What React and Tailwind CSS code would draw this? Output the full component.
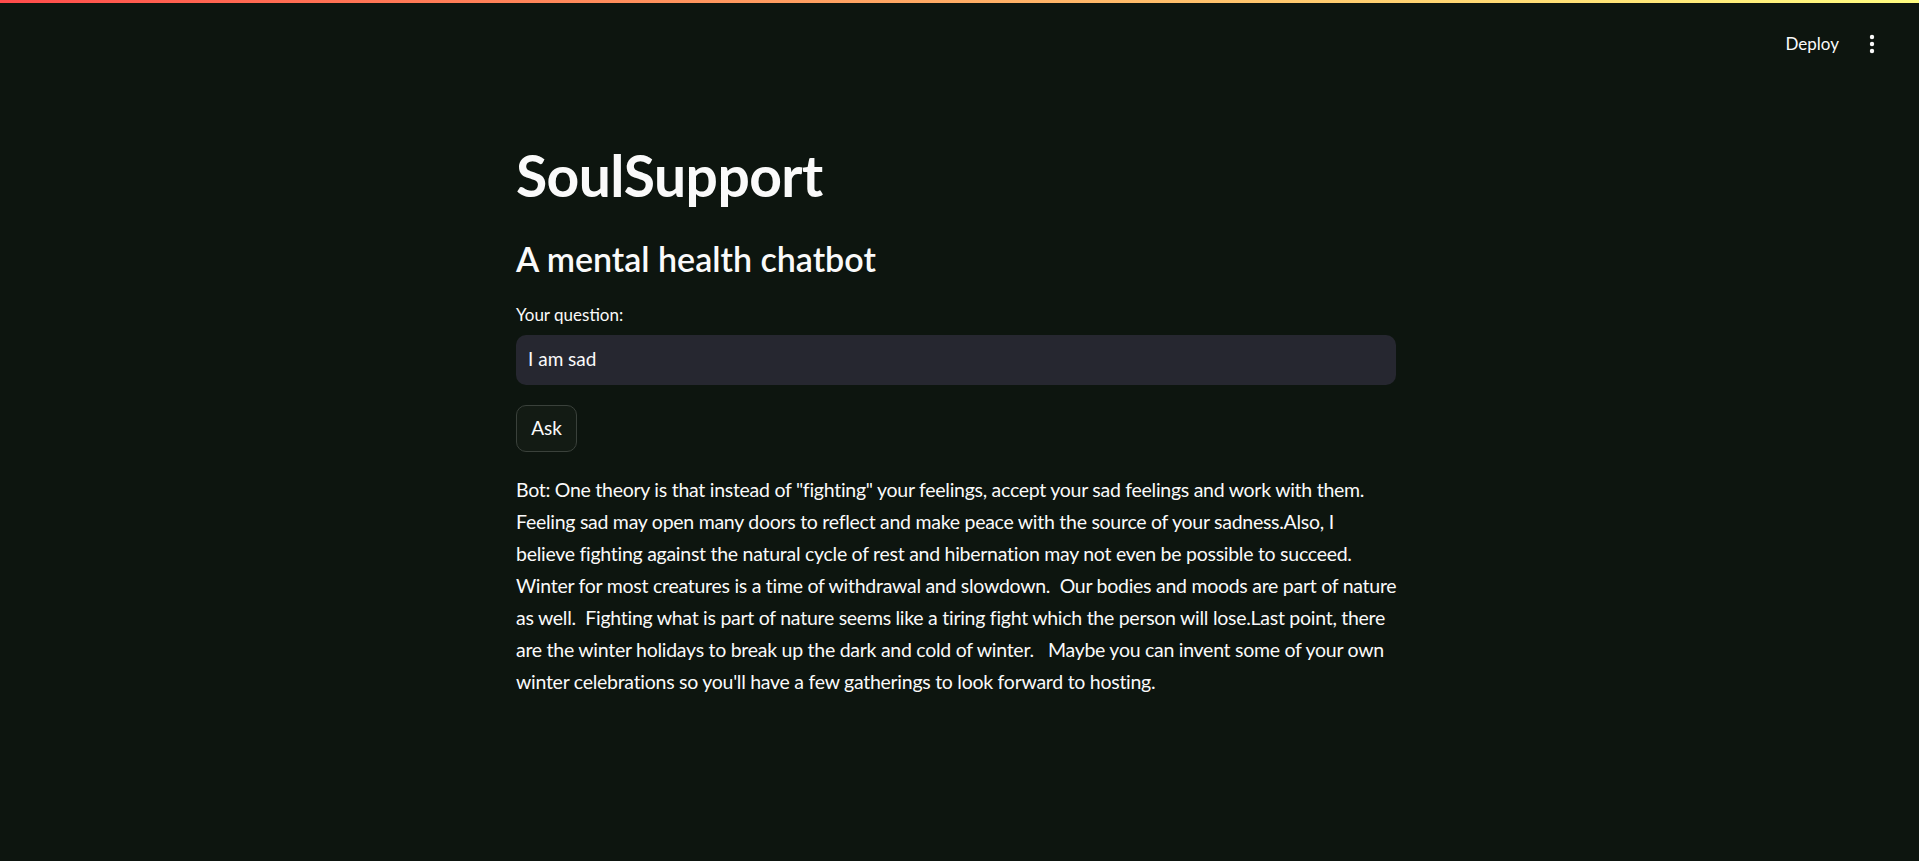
import React from "react";

const lines = [
  'Bot: One theory is that instead of "fighting" your feelings, accept your sad feelings and work with them.',
  "Feeling sad may open many doors to reflect and make peace with the source of your sadness.Also, I",
  "believe fighting against the natural cycle of rest and hibernation may not even be possible to succeed.",
  "Winter for most creatures is a time of withdrawal and slowdown.\u00a0 Our bodies and moods are part of nature",
  "as well.\u00a0 Fighting what is part of nature seems like a tiring fight which the person will lose.Last point, there",
  "are the winter holidays to break up the dark and cold of winter.\u00a0\u00a0 Maybe you can invent some of your own",
  "winter celebrations so you'll have a few gatherings to look forward to hosting.",
];

export default function App() {
  return (
    <div
      className="min-h-[861px] w-full bg-[#0d150f] text-[#fafafa]"
      style={{ fontFamily: "Lato, 'Noto Sans', sans-serif" }}
    >
      <div className="h-[3px] w-full bg-gradient-to-r from-[#ff4b4b] to-[#fffd80]" />
      <header className="flex h-[82px] items-center justify-end pr-[35px]">
        <span className="text-[17px] font-normal">Deploy</span>
        <span className="ml-[21px] flex h-[24px] w-[24px] items-center justify-center">
          <svg width="6" height="20" viewBox="0 0 6 20" fill="#fafafa">
            <circle cx="3" cy="3" r="2.2" />
            <circle cx="3" cy="10" r="2.2" />
            <circle cx="3" cy="17" r="2.2" />
          </svg>
        </span>
      </header>
      <main className="ml-[516px] w-[880px] pt-[56px]">
        <h1 className="text-[57px] font-bold leading-[1.2] tracking-[-0.01em]">SoulSupport</h1>
        <h3 className="mt-[30px] text-[34px] font-semibold leading-[1.2]">A mental health chatbot</h3>
        <label className="mt-[22px] block text-[17px] leading-[1.5]">Your question:</label>
        <div className="mt-[7px] flex h-[50px] items-center rounded-[10px] bg-[#262730] px-[12px] text-[19px]">
          I am sad
        </div>
        <button className="mt-[20px] flex h-[47px] w-[61px] items-center justify-center rounded-[10px] border border-[#3a413b] bg-[#131b14] text-[19px]">
          Ask
        </button>
        <div className="mt-[22px] text-[19.5px] leading-[32px] tracking-[-0.27px]">
          {lines.map((l, i) => (
            <div key={i} className="whitespace-pre">{l}</div>
          ))}
        </div>
      </main>
    </div>
  );
}
